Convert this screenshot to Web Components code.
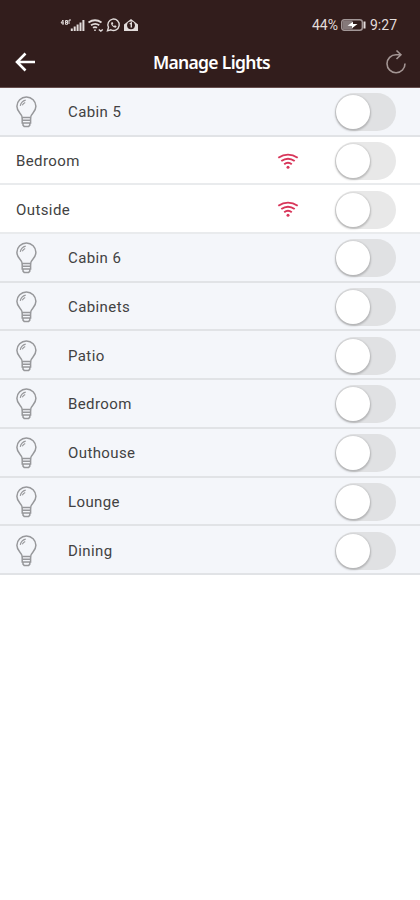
<!DOCTYPE html>
<html lang="en">
<head>
<meta charset="utf-8">
<title>Manage Lights</title>
<style>
  body {
    margin: 0;
    background: #fff;
    font-family: Roboto, sans-serif;
    color: #424242;
  }
</style>
</head>
<body>
<lights-screen>
  <status-bar slot="header" battery="44%" time="9:27"></status-bar>
  <title-bar slot="header">Manage Lights</title-bar>
  <light-row group>Cabin 5</light-row>
  <light-row wifi>Bedroom</light-row>
  <light-row wifi>Outside</light-row>
  <light-row group>Cabin 6</light-row>
  <light-row group>Cabinets</light-row>
  <light-row group>Patio</light-row>
  <light-row group>Bedroom</light-row>
  <light-row group>Outhouse</light-row>
  <light-row group>Lounge</light-row>
  <light-row group>Dining</light-row>
</lights-screen>

<script>
/* global HTMLElement */

class BaseElement extends HTMLElement {
  constructor () {
    super()
    const template = document.createElement('template')
    template.innerHTML = this.render()
    this.attachShadow({mode: 'open'})
    this.shadowRoot.appendChild(template.content.cloneNode(true))
  }
}

class LightsScreen extends BaseElement {
  render () {
    return `
      <style>
        :host { display: block; min-height: 900px; }
        header {
          background: #321d1c;
          border-bottom: 1px solid #674f4e;
          box-sizing: border-box;
          color: #fff;
          height: 88px;
        }
      </style>
      <header><slot name="header"></slot></header>
      <main><slot></slot></main>
    `
  }
}

class StatusBar extends BaseElement {
  render () {
    return `
      <style>
        :host {
          align-items: center;
          box-sizing: border-box;
          color: #e2dcdb;
          display: flex;
          font-size: 14px;
          height: 38px;
          justify-content: space-between;
          padding: 12px 23px 0 60px;
        }
        div { align-items: center; display: flex; }
        svg { display: block; }
        .battery { margin: 0 4px 0 3px; }
      </style>
      <div>
        <svg width="80" height="18" viewBox="0 0 80 18" fill="none" stroke="currentColor">
          <path d="M3 4 1 7h3M3 4v5M5.500 4.500h2v1.800h-2zM5.500 6.300h2v2h-2zM9 4v4M9 4h2" stroke-width="1"/>
          <path d="M11.800 12.500V15M14.700 10.500V15M17.600 8.500V15M20.500 6.500V15M23.400 4V15" stroke-width="2"/>
          <path d="M28.500 6.500q6.500-4.500 13 0M31 9.300q4.200-2.800 8.300 0M33 11.800q2-1.400 4 0" stroke-width="1.800"/>
          <path d="M35 13.600v1.500M38.800 13.500l2 1.500 2-1.500" stroke-width="1.500"/>
          <path d="M47.500 14.800l1-3.400a5.700 5.700 0 1 1 2.400 2.400z" stroke-width="1.400"/>
          <path d="M51 6.800q.3 4.200 4.700 5l1-1.500-1.700-1-1 .8q-1-.7-1.500-1.700l.8-.8-.8-1.700z" fill="currentColor" stroke="none"/>
          <path d="M64 8.500 71 3l7 5.500V15H64z" fill="currentColor" stroke="none"/>
          <circle cx="71" cy="9.300" r="3.900" fill="#321d1c" stroke="none"/>
          <path d="M69.700 8 71.300 7v4.500" stroke-width="1.400"/>
        </svg>
      </div>
      <div>
        <span id="battery"></span>
        <svg class="battery" width="25" height="12" viewBox="0 0 25 12" fill="none">
          <rect x=".7" y=".7" width="20.600" height="10.600" rx="2.500" stroke="#a39898" stroke-width="1.400"/>
          <rect x="1.500" y="1.500" width="10" height="9" fill="#85797a"/>
          <path d="M23.500 2.500v7" stroke="#e2dcdb" stroke-width="2"/>
          <path d="M6.500 6.800 12 2.800v2.200h4.500L11 9.200V7z" fill="#fff"/>
        </svg>
        <span id="time"></span>
      </div>
    `
  }

  connectedCallback () {
    this.shadowRoot.getElementById('battery').textContent = this.getAttribute('battery')
    this.shadowRoot.getElementById('time').textContent = this.getAttribute('time')
  }
}

class TitleBar extends BaseElement {
  render () {
    return `
      <style>
        :host {
          align-items: center;
          box-sizing: border-box;
          display: grid;
          grid-template-columns: 24px 1fr 24px;
          height: 48px;
          padding: 0 11px 0 14px;
        }
        h1 {
          font: 600 17.500px "Noto Sans", sans-serif;
          letter-spacing: -.68px;
          margin: 0;
          text-align: center;
        }
        svg { display: block; }
      </style>
      <svg width="24" height="24" viewBox="0 0 24 24" fill="none" stroke="#fff" stroke-width="2.600">
        <path d="M21 12H3M11.500 3.500 3 12l8.500 8.500"/>
      </svg>
      <h1><slot></slot></h1>
      <svg width="24" height="26" viewBox="0 0 24 26" fill="none" stroke="#a39593" stroke-width="1.600">
        <path d="M20 14.500A9 9 0 1 1 11 5.700h4.700M11.500 1.500 15.900 5.700l-4.400 4.300"/>
      </svg>
    `
  }
}

class LightBulb extends BaseElement {
  render () {
    return `
      <style>
        :host { display: block; }
        svg { display: block; }
      </style>
      <svg width="21" height="32" viewBox="0 0 21 32" fill="none" stroke="#97989b" stroke-width="1.500">
        <path d="M6.200 21.500C6 17.500.9 16.500.9 10.300a9.500 9.300 0 0 1 19 0C19.900 16.500 14.800 17.500 14.600 21.500z"/>
        <path d="M6.200 21.500v5.500h8.400v-5.500M6.200 24.300h8.400M7 27v2.200l1.200 1.200h4.400l1.200-1.200V27"/>
        <path d="M4.300 9.800q.8-4.400 5.400-5.600M6.300 9.300q.9-1.900 2.900-2.800" stroke-width="1.200"/>
      </svg>
    `
  }
}

class WifiIcon extends BaseElement {
  render () {
    return `
      <style>
        :host { display: block; }
        svg { display: block; }
      </style>
      <svg width="22" height="17" viewBox="0 0 22 17" fill="none" stroke="#d8365a" stroke-width="1.900">
        <path d="M1.300 4.800q9.700-6.400 19.400 0M4.300 8.100q6.700-4.800 13.400 0M7.200 11.300q3.800-3 7.600 0"/>
        <circle cx="11" cy="14.200" r="1.500" fill="#d8365a" stroke="none"/>
      </svg>
    `
  }
}

class ToggleSwitch extends BaseElement {
  render () {
    return `
      <style>
        :host {
          background: var(--track, #e1e2e4);
          border-radius: 19px;
          box-sizing: border-box;
          display: block;
          height: 38px;
          padding: 2px 1px;
          width: 61px;
        }
        span {
          background: #fff;
          border-radius: 50%;
          box-shadow: 0 1px 2px 1px rgba(0, 0, 0, .2);
          display: block;
          height: 34px;
          width: 34px;
        }
      </style>
      <span></span>
    `
  }
}

class LightRow extends BaseElement {
  render () {
    return `
      <style>
        :host {
          --track: #e8e8e8;
          align-items: center;
          border-bottom: 2px solid #e9ebed;
          box-sizing: border-box;
          display: grid;
          font-size: 15px;
          grid-template-columns: 0 1fr 22px 61px;
          height: 48.700px;
          letter-spacing: .4px;
          padding: 2px 24px 0 16px;
        }
        :host([group]) {
          --track: #e0e1e3;
          background: #f4f6fa;
          border-bottom-color: #e1e3e6;
          grid-template-columns: 52px 1fr 22px 61px;
        }
        light-bulb, wifi-icon { visibility: hidden; }
        wifi-icon { margin-left: -36px; }
        :host([group]) light-bulb, :host([wifi]) wifi-icon { visibility: visible; }
      </style>
      <light-bulb></light-bulb>
      <span><slot></slot></span>
      <wifi-icon></wifi-icon>
      <toggle-switch></toggle-switch>
    `
  }
}

window.customElements.define('light-bulb', LightBulb)
window.customElements.define('wifi-icon', WifiIcon)
window.customElements.define('toggle-switch', ToggleSwitch)
window.customElements.define('light-row', LightRow)
window.customElements.define('status-bar', StatusBar)
window.customElements.define('title-bar', TitleBar)
window.customElements.define('lights-screen', LightsScreen)
</script>
</body>
</html>
